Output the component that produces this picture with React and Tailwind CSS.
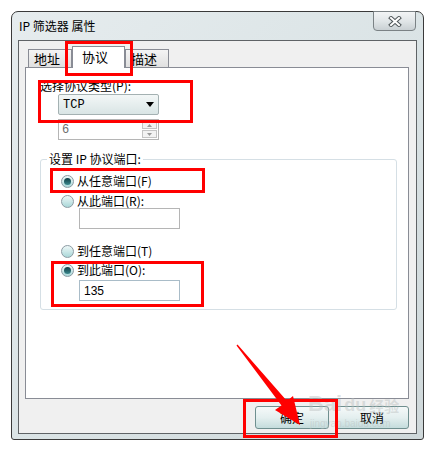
import React from 'react';

const Radio = ({ checked, label }) => (
    <div className="flex items-center h-[14px]">
        <div className="w-[13px] h-[13px] rounded-full border border-[#8c9ba3] bg-gradient-to-b from-[#eef8f8] to-[#a9d7d8] flex items-center justify-center">
            {checked && <div className="w-[7px] h-[7px] rounded-full bg-gradient-to-b from-[#0f3d44] to-[#3b8a8f]" />}
        </div>
        <span className="ml-[3px]">{label}</span>
    </div>
);

const Tab = ({ label, active }) =>
    active ? (
        <div className="relative z-10 -mb-px w-[53px] h-[22px] border border-b-0 border-[#898c95] bg-white pl-[9px] pt-[3px] text-[13px]">
            {label}
        </div>
    ) : (
        <div className="w-[44px] h-[18px] border border-b-0 border-[#898c95] bg-gradient-to-b from-[#f4f4f4] to-[#e0e0e0] pl-[5px] leading-[18px] text-[13px]">
            {label}
        </div>
    );

export default function App() {
    return (
        <div className="relative w-[436px] h-[451px] overflow-hidden bg-white text-[12px] text-black font-['Noto_Sans_CJK_SC',sans-serif] leading-[14px]">
            {/* window */}
            <div className="ml-[11px] mt-[11px] w-[413px] h-[429px] rounded-t-[7px] rounded-b-[3px] border border-[#3a3a3a] bg-gradient-to-br from-[#e6ecee] via-[#dbe4e6] to-[#cfd8da] flex flex-col">
                <div className="h-[28px] flex items-start justify-between">
                    <div className="pl-[7px] pt-[7px] text-[12px]">IP 筛选器 属性</div>
                    <div className="mr-[7px] -mt-px w-[43px] h-[20px] rounded-b-[4px] border border-[#7b8285] bg-gradient-to-b from-[#f2f4f5] via-[#e1e6e8] to-[#c9d0d3] flex items-center justify-center">
                        <svg width="14" height="11" viewBox="0 0 14 11">
                            <path d="M3 2 L11 9 M11 2 L3 9" stroke="#50575a" strokeWidth="4" strokeLinecap="square" />
                            <path d="M3 2 L11 9 M11 2 L3 9" stroke="#ffffff" strokeWidth="2" strokeLinecap="square" />
                        </svg>
                    </div>
                </div>

                {/* client area */}
                <div className="mx-[6px] mb-[5px] flex-1 border border-[#5f6366] bg-[#f0f0f0] flex flex-col">
                    <div className="ml-[9px] mt-[5px] h-[21px] flex items-end">
                        <Tab label="地址" />
                        <Tab label="协议" active />
                        <Tab label="描述" />
                    </div>

                    <div className="ml-[6px] mr-[7px] h-[332px] border border-[#898c95] bg-white flex flex-col pl-[14px]">
                        <div className="mt-[11px]">选择协议类型(P):</div>
                        <div className="ml-[18px] mt-px w-[101px] h-[21px] rounded-[2px] border border-[#a4b1b2] bg-gradient-to-b from-[#f3f7f7] to-[#d9e5e5] flex items-center justify-between px-[4px]">
                            <span className="font-['Liberation_Mono',monospace] text-[12px]">TCP</span>
                            <svg width="8" height="5" viewBox="0 0 8 5">
                                <path d="M0 0 H8 L4 5 Z" fill="#000" />
                            </svg>
                        </div>
                        <div className="ml-[18px] mt-[4px] w-[101px] h-[21px] border border-[#b5b5b5] bg-white flex items-center justify-between pl-[3px] pr-px">
                            <span className="text-[#6d6d6d] font-['Liberation_Mono',monospace]">6</span>
                            <div className="flex flex-col gap-px">
                                <div className="w-[15px] h-[8px] border border-[#c4c4c4] bg-[#f3f3f3] flex items-center justify-center">
                                    <svg width="5" height="3" viewBox="0 0 5 3"><path d="M0 3 H5 L2.5 0 Z" fill="#9a9a9a" /></svg>
                                </div>
                                <div className="w-[15px] h-[8px] border border-[#c4c4c4] bg-[#f3f3f3] flex items-center justify-center">
                                    <svg width="5" height="3" viewBox="0 0 5 3"><path d="M0 0 H5 L2.5 3 Z" fill="#9a9a9a" /></svg>
                                </div>
                            </div>
                        </div>

                        <fieldset className="mt-[12px] w-[357px] h-[158px] rounded-[3px] border border-[#d5dfe5] pl-[20px] pt-[8px]">
                            <legend className="-ml-[14px] px-[2px]">设置 IP 协议端口:</legend>
                            <Radio checked label="从任意端口(F)" />
                            <div className="mt-[6px]">
                                <Radio label="从此端口(R):" />
                            </div>
                            <div className="ml-[18px] w-[101px] h-[21px] border border-[#b5b5b5] bg-white" />
                            <div className="mt-[15px]">
                                <Radio label="到任意端口(T)" />
                            </div>
                            <div className="mt-[5px]">
                                <Radio checked label="到此端口(O):" />
                            </div>
                            <div className="ml-[18px] mt-[3px] w-[101px] h-[21px] border border-[#a9bcc8] bg-white flex items-center pl-[4px] font-['Liberation_Sans',sans-serif]">
                                135
                            </div>
                        </fieldset>
                    </div>

                    <div className="mt-[7px] pr-[7px] flex justify-end gap-[6px]">
                        <button className="w-[74px] h-[23px] rounded-[3px] border border-[#6f8f8f] bg-gradient-to-b from-[#f5f9f9] via-[#e4efef] to-[#c4dcdc] text-[12px]">确定</button>
                        <button className="w-[74px] h-[23px] rounded-[3px] border border-[#6f8f8f] bg-gradient-to-b from-[#f5f9f9] via-[#e4efef] to-[#c4dcdc] text-[12px]">取消</button>
                    </div>
                </div>
            </div>

            {/* watermark */}
            <div className="absolute left-[308px] top-[393px] flex items-end text-[rgba(185,190,190,0.45)] font-['Liberation_Sans',sans-serif] font-bold">
                <span className="text-[22px] leading-[22px]">Bai</span>
                <span className="text-[18px] leading-[20px] ml-[2px]">du</span>
                <span className="text-[15px] leading-[18px] ml-[3px] font-['Noto_Sans_CJK_SC',sans-serif]">经验</span>
            </div>
            <div className="absolute left-[310px] top-[417px] text-[10px] text-[rgba(185,190,190,0.45)] font-['Liberation_Sans',sans-serif]">
                jingyan.baidu.com
            </div>

            {/* red annotations */}
            <div className="absolute left-[65px] top-[41px] w-[68px] h-[35px] border-[3px] border-[#ff0000]" />
            <div className="absolute left-[38px] top-[80px] w-[155px] h-[43px] border-[3px] border-[#ff0000]" />
            <div className="absolute left-[50px] top-[168px] w-[155px] h-[25px] border-[3px] border-[#ff0000]" />
            <div className="absolute left-[51px] top-[261px] w-[153px] h-[46px] border-[3px] border-[#ff0000]" />
            <div className="absolute left-[243px] top-[399px] w-[95px] h-[39px] border-[3px] border-[#ff0000]" />
            <svg className="absolute left-0 top-0" width="436" height="451" viewBox="0 0 436 451">
                <polygon points="237.5,344.5 287,401 293,396 300,425 275,410 281.5,405.5 236.5,345.5" fill="#ff0000" />
            </svg>
        </div>
    );
}
